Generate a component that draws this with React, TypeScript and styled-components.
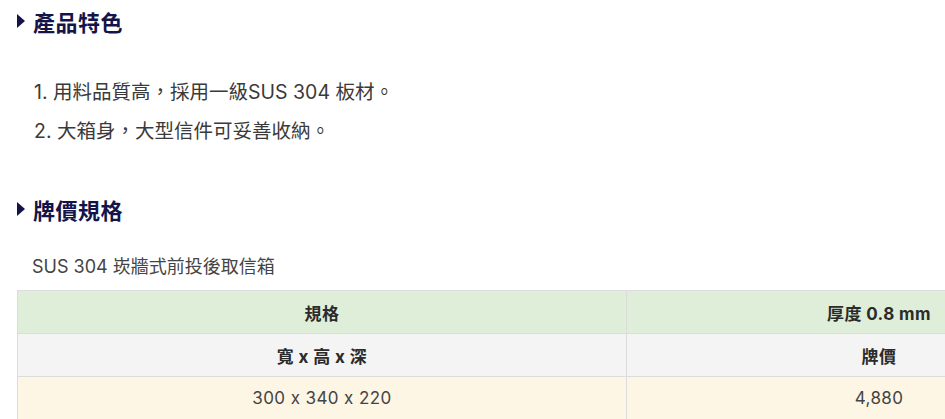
import styled, { createGlobalStyle } from "styled-components";

const GlobalStyle = createGlobalStyle`
  html, body {
    margin: 0;
    padding: 0;
    background: #fff;
    overflow: hidden;
  }
  body {
    font-family: Inter, "Noto Sans CJK TC", sans-serif;
    font-feature-settings: "calt" 0;
    color: #333;
  }
`;

const Page = styled.div`
  width: 945px;
  height: 419px;
  overflow: hidden;
  padding-left: 17px;
  box-sizing: border-box;
`;

const SectionTitle = styled.h3<{ $top: number }>`
  display: flex;
  align-items: center;
  gap: 8px;
  margin: ${(p) => p.$top}px 0 0;
  height: 26px;
  font-size: 22px;
  font-weight: 700;
  color: #14144a;
  letter-spacing: 0.5px;
`;

const Arrow = styled.span`
  width: 0;
  height: 0;
  border-top: 7px solid transparent;
  border-bottom: 7px solid transparent;
  border-left: 8px solid #14144a;
`;

const Features = styled.ol`
  margin: 39px 0 0;
  padding-left: 0;
  list-style: none;
`;

const Feature = styled.li`
  height: 39px;
  line-height: 39px;
  font-size: 19.5px;
  color: #3a3a3a;
  padding-left: 17px;
  white-space: nowrap;
`;

const Subtitle = styled.p`
  margin: 35px 0 0 15px;
  font-size: 18px;
  line-height: 20px;
  color: #444;
  white-space: nowrap;
`;

const PriceTable = styled.table`
  margin-top: 13px;
  width: 1115px;
  border-collapse: collapse;
  table-layout: fixed;
`;

const Row = styled.tr<{ $bg: string }>`
  background: ${(p) => p.$bg};
  height: 43px;
`;

const Cell = styled.td<{ $bold?: boolean; $width?: number }>`
  border: 1px solid #dcdcdc;
  text-align: center;
  font-size: 17px;
  letter-spacing: 0.4px;
  color: ${(p) => (p.$bold ? "#2b2b2b" : "#444")};
  font-weight: ${(p) => (p.$bold ? 700 : 400)};
  padding: 0;
  ${(p) => (p.$width ? `width: ${p.$width}px;` : "")}
`;

const App = () => {
  return (
    <Page>
      <GlobalStyle />
      <SectionTitle $top={8}>
        <Arrow />
        產品特色
      </SectionTitle>
      <Features>
        <Feature>1. 用料品質高，採用一級SUS 304 板材。</Feature>
        <Feature>2. 大箱身，大型信件可妥善收納。</Feature>
      </Features>
      <SectionTitle $top={45}>
        <Arrow />
        牌價規格
      </SectionTitle>
      <Subtitle>SUS 304 崁牆式前投後取信箱</Subtitle>
      <PriceTable>
        <tbody>
          <Row $bg="#deeed9">
            <Cell $bold $width={608}>規格</Cell>
            <Cell $bold>厚度 0.8 mm</Cell>
          </Row>
          <Row $bg="#f4f4f4">
            <Cell $bold>寬 x 高 x 深</Cell>
            <Cell $bold>牌價</Cell>
          </Row>
          <Row $bg="#fdf6e4">
            <Cell>300 x 340 x 220</Cell>
            <Cell>4,880</Cell>
          </Row>
        </tbody>
      </PriceTable>
    </Page>
  );
};

export default App;
